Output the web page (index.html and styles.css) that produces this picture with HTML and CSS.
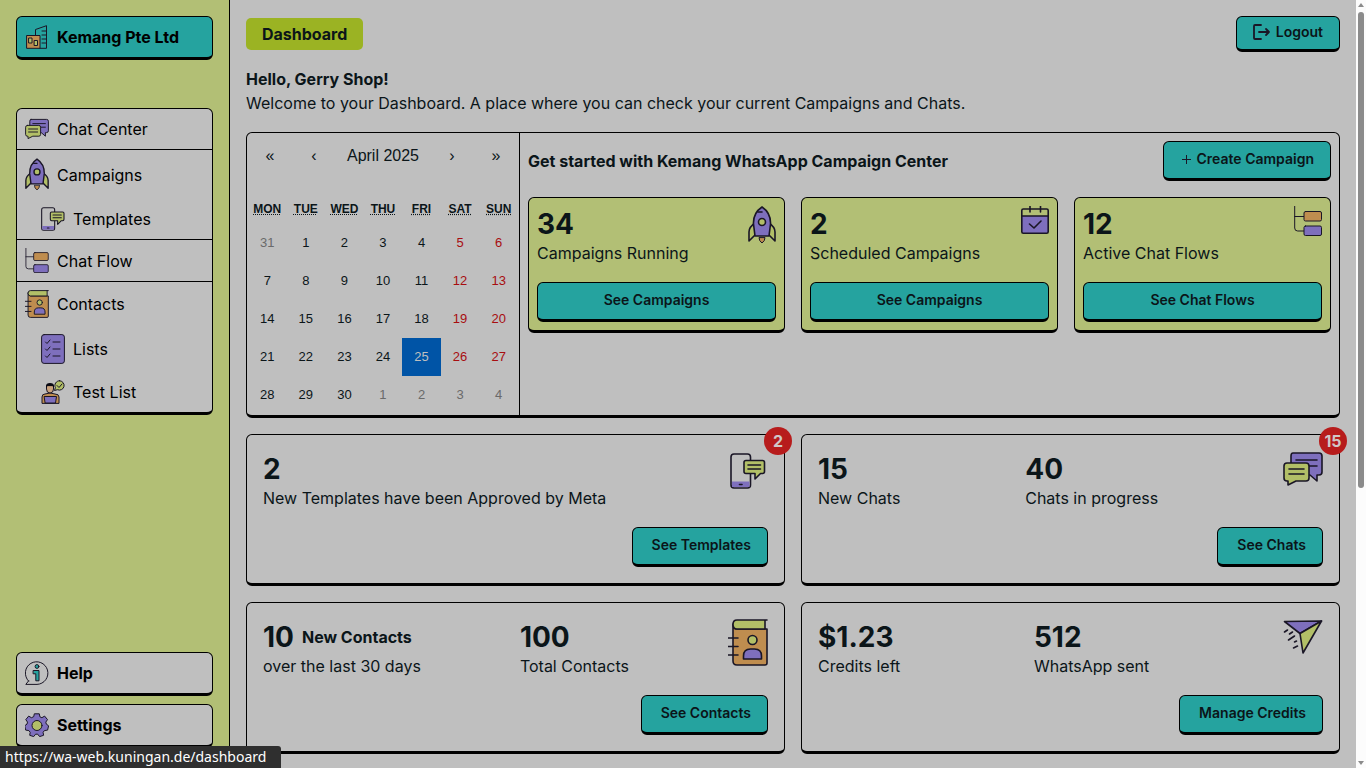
FILE: index.html
```html
<!DOCTYPE html>
<html lang="en">
<head>
<meta charset="utf-8">
<title>Dashboard</title>
<link rel="stylesheet" href="styles.css">
</head>
<body>
<svg class="sprite" aria-hidden="true">
  <symbol id="i-chat" viewBox="0 0 40 34">
    <path class="f-purple s" d="M10 1h26q3 0 3 3v16q0 3-3 3h-2v6l-7-6H10q-2 0-2-3V4q0-3 2-3z"/>
    <path class="s" d="M13 8h21M13 14h21"/>
    <path class="f-green s" d="M4 11h19q3 0 3 3v12q0 3-3 3H13l-8 4v-4H4q-3 0-3-3V14q0-3 3-3z"/>
    <path class="s" d="M6 17h15M6 22h15"/>
  </symbol>
  <symbol id="i-rocket" viewBox="0 0 28 38">
    <path class="f-green s" d="M7 17Q1 21 1 26v9l6-6zM21 17q6 4 6 9v9l-6-6z"/>
    <path class="f-orange thin" d="M11 32q0 3 3 5 3-2 3-5z"/>
    <path class="f-purple s" d="M14 1Q5 7 5.500 18L7 30h14l1.500-12Q23 7 14 1z"/>
    <path class="s" d="M10 6h4"/>
    <circle class="f-green s" cx="14" cy="16" r="3.500"/>
  </symbol>
  <symbol id="i-phone" viewBox="0 0 36 36">
    <rect class="s" x="1" y="1" width="19.500" height="34" rx="3"/>
    <path class="f-purple" d="M2 28.500h17.500V34H2z"/>
    <path class="s" d="M9.500 31.500h2.500"/>
    <path class="f-green s" d="M16 7.500h16.500q2 0 2 2v9q0 2-2 2H30.500l-5.500 5.500v-5.500h-9q-2 0-2-2v-9q0-2 2-2z"/>
    <path class="s" d="M18 12h12.500M18 16h12.500"/>
  </symbol>
  <symbol id="i-flow" viewBox="0 0 28 30">
    <path class="thin" d="M.7 0v22q0 3 3 3H10M.7 10.500H10"/>
    <rect class="f-orange thin" x="10" y="5.500" width="17.500" height="9.500" rx="1.500"/>
    <rect class="f-purple thin" x="10" y="20" width="17.500" height="9.500" rx="1.500"/>
  </symbol>
  <symbol id="i-contacts" viewBox="0 0 40 47">
    <path class="f-orange s" d="M5 6v36q0 4 4 4h28q2 0 2-2V10H9Q5 10 5 5z"/>
    <path class="f-green s" d="M39 1H9Q5 1 5 5.500T9 10h28V1"/>
    <circle class="f-green s" cx="24.500" cy="21" r="4.500"/>
    <path class="f-purple s" d="M15.500 40v-3q0-7 7-7h4q7 0 7 7v3z"/>
    <path class="s" d="M0 19h10M0 27.500h10M0 36h10"/>
  </symbol>
  <symbol id="i-list" viewBox="0 0 24 30">
    <rect class="f-purple thin" x=".6" y=".6" width="22.800" height="28.800" rx="2.500"/>
    <path class="thin" d="M4.500 8l1.500 1.500L9 6M12 8h7M4.500 15l1.500 1.500L9 13M12 15h7M4.500 22l1.500 1.500L9 20M12 22h7"/>
  </symbol>
  <symbol id="i-person" viewBox="0 0 24 24">
    <path class="f-orange thin" d="M1 23v-6q0-3 3-3l5-1 5 1q4 0 4 3v6z"/>
    <path class="f-skin thin" d="M5.500 6v3q0 4 3.500 4t3.500-4V6z"/>
    <path class="f-ink" d="M5 8V6q0-3 4-3t4 3v2L11.500 6h-5z"/>
    <path class="f-purple thin" d="M3.500 16.500h12l-1 6.500h-10z"/>
    <path class="f-green thin" d="M18.500.7a4.700 4.700 0 1 1-2 9l-3 .8.900-2.900A4.700 4.700 0 0 1 18.500.7z"/>
    <path class="thin" d="M16 5.500l2 2 3-3.500"/>
  </symbol>
  <symbol id="i-building" viewBox="0 0 24 24">
    <path class="thin" d="M10.500 10V4.500L21.500.7v22.600H15M17 6h4M17 10h4M17 14h4M17 18h4"/>
    <path class="f-orange thin" d="M2 10.500h13v12.800H2z"/>
    <path class="f-green thin" d="M4 13h3v5H4zM9.500 15.500h3v5h-3z"/>
  </symbol>
  <symbol id="i-help" viewBox="0 0 24 24">
    <path class="thin" d="M3.500 20A11.300 11.300 0 1 1 12 23.400H.8L3.500 20z"/>
    <circle class="f-teal thin" cx="12" cy="5.500" r="1.900"/>
    <path class="f-teal thin" d="M8.500 9.500H14v10.300h-3.200v-7H8.500z"/>
  </symbol>
  <symbol id="i-gear" viewBox="0 0 24 24">
    <path class="f-purple thin" d="M9.700.8h4.600l.6 3 2 .9 2.700-1.600 2.900 3.500-1.700 2.500.5 2 2.300 1.700-1 4.300-3.200.5-1.300 1.700.5 3-4 1.300-1.900-2.400h-2.100l-1.900 2.400-4-1.300.5-3-1.300-1.700-3.200-.5-1-4.300 2.300-1.700.5-2-1.700-2.500 2.900-3.500 2.700 1.600 2-.9z"/>
    <circle class="f-green thin" cx="12" cy="12.500" r="5"/>
  </symbol>
  <symbol id="i-calendar" viewBox="0 0 28 28">
    <path class="f-purple" d="M1 10h26v17H1z"/>
    <rect class="s" x=".8" y="3" width="26.400" height="24.200" rx="1.500"/>
    <path class="s" d="M1 10h26M9 0v6M19.500 0v6M8.500 18l4.500 4 7-7"/>
  </symbol>
  <symbol id="i-plane" viewBox="0 0 39 34">
    <path class="f-purple s" d="M1 1.500L38 1 16.500 13.500z"/>
    <path class="f-green s" d="M38 1L16.500 13.500 19.500 33z"/>
    <path class="s" d="M1 12l3-2M6 14l3-2M5 20l6-4M11 22l2-1M10 28l4-2"/>
  </symbol>
  <symbol id="i-logout" viewBox="0 0 18 16">
    <path class="bold" d="M8 1H2Q1 1 1 2v12q0 1 1 1h6M6 8h10M13 5l3 3-3 3"/>
  </symbol>
</svg>

<div class="app">
  <aside class="sidebar">
    <a class="tile tile-brand" href="#"><svg class="ic24"><use href="#i-building"/></svg>Kemang Pte Ltd</a>
    <nav class="menu">
      <div class="group">
        <a class="item" href="#"><svg class="ic24"><use href="#i-chat"/></svg>Chat Center</a>
      </div>
      <div class="group">
        <a class="item" href="#"><svg class="ic33"><use href="#i-rocket"/></svg>Campaigns</a>
        <a class="item sub" href="#"><svg class="ic24"><use href="#i-phone"/></svg>Templates</a>
      </div>
      <div class="group">
        <a class="item" href="#"><svg class="ic25"><use href="#i-flow"/></svg>Chat Flow</a>
      </div>
      <div class="group">
        <a class="item" href="#"><svg class="ic28"><use href="#i-contacts"/></svg>Contacts</a>
        <a class="item sub" href="#"><svg class="ic30"><use href="#i-list"/></svg>Lists</a>
        <a class="item sub" href="#"><svg class="ic24"><use href="#i-person"/></svg>Test List</a>
      </div>
    </nav>
    <div class="foot">
      <a class="tile" href="#"><svg class="ic24"><use href="#i-help"/></svg>Help</a>
      <a class="tile" href="#"><svg class="ic24"><use href="#i-gear"/></svg>Settings</a>
    </div>
  </aside>

  <main class="main">
    <header class="top">
      <h1 class="pill">Dashboard</h1>
      <button class="btn btn-logout" type="button"><svg class="ic-logout"><use href="#i-logout"/></svg>Logout</button>
    </header>
    <section class="intro">
      <h2 class="hello">Hello, Gerry Shop!</h2>
      <p class="welcome">Welcome to your Dashboard. A place where you can check your current Campaigns and Chats.</p>
    </section>

    <section class="panel">
      <div class="cal">
        <div class="cal-nav">
          <button type="button" aria-label="Previous year">«</button>
          <button type="button" aria-label="Previous month">‹</button>
          <button type="button" class="cal-label">April 2025</button>
          <button type="button" aria-label="Next month">›</button>
          <button type="button" aria-label="Next year">»</button>
        </div>
        <table class="cal-table">
          <thead><tr>
            <th><abbr title="Monday">MON</abbr></th><th><abbr title="Tuesday">TUE</abbr></th><th><abbr title="Wednesday">WED</abbr></th><th><abbr title="Thursday">THU</abbr></th><th><abbr title="Friday">FRI</abbr></th><th><abbr title="Saturday">SAT</abbr></th><th><abbr title="Sunday">SUN</abbr></th>
          </tr></thead>
          <tbody>
            <tr><td class="out">31</td><td>1</td><td>2</td><td>3</td><td>4</td><td class="we">5</td><td class="we">6</td></tr>
            <tr><td>7</td><td>8</td><td>9</td><td>10</td><td>11</td><td class="we">12</td><td class="we">13</td></tr>
            <tr><td>14</td><td>15</td><td>16</td><td>17</td><td>18</td><td class="we">19</td><td class="we">20</td></tr>
            <tr><td>21</td><td>22</td><td>23</td><td>24</td><td class="today">25</td><td class="we">26</td><td class="we">27</td></tr>
            <tr><td>28</td><td>29</td><td>30</td><td class="out">1</td><td class="out">2</td><td class="out">3</td><td class="out">4</td></tr>
          </tbody>
        </table>
      </div>
      <div class="start">
        <div class="start-head">
          <h2 class="start-title">Get started with Kemang WhatsApp Campaign Center</h2>
          <button class="btn btn-create" type="button"><svg class="ic-plus" viewBox="0 0 9 9"><path class="thin" d="M4.500 0v9M0 4.500h9"/></svg>Create Campaign</button>
        </div>
        <div class="stats">
          <article class="stat">
            <div class="row"><div><p class="num">34</p><p class="label">Campaigns Running</p></div><svg class="ic-rocket"><use href="#i-rocket"/></svg></div>
            <button class="btn" type="button">See Campaigns</button>
          </article>
          <article class="stat">
            <div class="row"><div><p class="num">2</p><p class="label">Scheduled Campaigns</p></div><svg class="ic-cal"><use href="#i-calendar"/></svg></div>
            <button class="btn" type="button">See Campaigns</button>
          </article>
          <article class="stat">
            <div class="row"><div><p class="num">12</p><p class="label">Active Chat Flows</p></div><svg class="ic-flow"><use href="#i-flow"/></svg></div>
            <button class="btn" type="button">See Chat Flows</button>
          </article>
        </div>
      </div>
    </section>

    <section class="cards">
      <article class="card">
        <span class="badge">2</span>
        <div class="row"><div><p class="num">2</p><p class="label">New Templates have been Approved by Meta</p></div><svg class="ic-phone"><use href="#i-phone"/></svg></div>
        <button class="btn btn-card" type="button">See Templates</button>
      </article>
      <article class="card">
        <span class="badge">15</span>
        <div class="row"><div><p class="num">15</p><p class="label">New Chats</p></div><div><p class="num">40</p><p class="label">Chats in progress</p></div><svg class="ic-chat"><use href="#i-chat"/></svg></div>
        <button class="btn btn-card" type="button">See Chats</button>
      </article>
      <article class="card">
        <div class="row"><div><p class="num">10<span class="aside">New Contacts</span></p><p class="label">over the last 30 days</p></div><div><p class="num">100</p><p class="label">Total Contacts</p></div><svg class="ic-contacts"><use href="#i-contacts"/></svg></div>
        <button class="btn btn-card" type="button">See Contacts</button>
      </article>
      <article class="card">
        <div class="row"><div><p class="num">$1.23</p><p class="label">Credits left</p></div><div><p class="num">512</p><p class="label">WhatsApp sent</p></div><svg class="ic-chat"><use href="#i-plane"/></svg></div>
        <button class="btn btn-card" type="button">Manage Credits</button>
      </article>
    </section>
  </main>

  <div class="scroll" aria-hidden="true">
    <span class="arrow up"></span>
    <span class="track"><span class="thumb"></span></span>
    <span class="arrow down"></span>
  </div>
</div>
<div class="status">https://wa-web.kuningan.de/dashboard</div>
</body>
</html>
```
FILE: styles.css
```css
:root {
  --page: #bfbfbf;
  --green: #b2bf75;
  --teal: #25a39f;
  --ink: #0b1519;
  --line: #000;
}
* { box-sizing: border-box; }
body {
  margin: 0;
  font: 16px/24px Inter, "Liberation Sans", sans-serif;
  color: var(--ink);
  background: var(--page);
  overflow: hidden;
}
h1, h2, p { margin: 0; font-size: 16px; }
a { color: #000; text-decoration: none; }
button { font: inherit; color: inherit; padding: 0; cursor: pointer; }
svg { display: block; flex: none; }
.sprite { position: absolute; width: 0; height: 0; }

.s, .thin, .bold { stroke: #1a1626; stroke-linecap: round; stroke-linejoin: round; fill: none; }
.s { stroke-width: 1.6; }
.thin { stroke-width: 1; }
.bold { stroke-width: 1.8; }
.f-purple { fill: #7e6fbd; }
.f-green { fill: #b2bf67; }
.f-orange { fill: #bf8d4f; }
.f-skin { fill: #c9a27c; }
.f-teal { fill: #25a39f; }
.f-ink { fill: #0b0b14; }

.app { display: flex; height: 100vh; }

.sidebar {
  flex: none;
  width: 230px;
  padding: 16px 16px 20px;
  display: flex;
  flex-direction: column;
  background: var(--green);
  border-right: 1px solid var(--line);
}
.tile {
  display: flex;
  align-items: center;
  gap: 8px;
  height: 44px;
  padding: 0 8px;
  font-weight: 700;
  line-height: 22px;
  background: var(--page);
  border: 1px solid var(--line);
  border-bottom-width: 3px;
  border-radius: 6px;
}
.tile-brand { background: var(--teal); }
.menu {
  margin-top: 48px;
  background: var(--page);
  border: 1px solid var(--line);
  border-bottom-width: 3px;
  border-radius: 6px;
}
.group + .group { border-top: 1px solid var(--line); }
.item { display: flex; align-items: center; gap: 8px; padding: 8px; }
.sub { padding-left: 24px; }
.foot { margin-top: auto; display: grid; gap: 8px; }

.ic24 { width: 24px; height: 24px; }
.ic25 { width: 24px; height: 25px; }
.ic28 { width: 24px; height: 28px; }
.ic30 { width: 24px; height: 30px; }
.ic33 { width: 24px; height: 33px; }
.ic-rocket { width: 28px; height: 38px; }
.ic-cal { width: 28px; height: 28px; }
.ic-flow { width: 28px; height: 30px; }
.ic-phone { width: 36px; height: 36px; margin: 2px 2px 0 0; }
.ic-chat { width: 40px; height: 34px; margin-top: 1px; }
.ic-contacts { width: 40px; height: 47px; }
.ic-logout { width: 18px; height: 16px; }
.ic-plus { width: 9px; height: 9px; }

.main { flex: 1; min-width: 0; padding: 16px; overflow: hidden; }
.top { display: flex; justify-content: space-between; align-items: center; }
.pill {
  padding: 4px 16px;
  background: #9bb323;
  border-radius: 5px;
  font-weight: 700;
}
.btn {
  display: flex;
  align-items: center;
  justify-content: center;
  height: 40px;
  padding-bottom: 2px;
  font-size: 14px;
  font-weight: 600;
  background: var(--teal);
  border: 1px solid var(--line);
  border-bottom-width: 3px;
  border-radius: 6px;
}
.btn-logout { height: 36px; padding-left: 16px; padding-right: 16px; gap: 5px; }
.btn-create { padding-left: 18px; padding-right: 16px; gap: 6px; }
.btn-card { align-self: flex-end; padding-left: 19px; padding-right: 16px; }

.intro { margin: 15px 0 17px; }
.hello { font-weight: 700; }

.panel {
  display: flex;
  border: 1px solid var(--line);
  border-bottom-width: 3px;
  border-radius: 6px;
}
.cal {
  flex: none;
  width: 273px;
  padding: 1px;
  border-right: 1px solid var(--line);
  font-family: "Liberation Sans", Arial, sans-serif;
}
.cal-nav { display: flex; height: 44px; margin-bottom: 16px; }
.cal-nav button { width: 44px; border: 0; background: none; }
.cal-nav .cal-label { flex: 1; }
.cal-table { width: 100%; table-layout: fixed; border-collapse: collapse; text-align: center; font-size: 13px; line-height: 16px; }
.cal-table th { height: 30px; padding: 0; font-size: 12px; }
.cal-table td { height: 38px; padding: 0; }
.cal-table .out { color: #6a6a6a; }
.cal-table .we { color: #a80d10; }
.cal-table .today { background: #0054a6; color: #bfbfbf; }

.start { flex: 1; min-width: 0; padding: 8px; display: flex; flex-direction: column; gap: 16px; }
.start-head { display: flex; justify-content: space-between; align-items: center; }
.start-title { font-weight: 700; line-height: 22px; }
.stats { display: grid; grid-template-columns: repeat(3, 1fr); gap: 16px; }
.stat, .card {
  display: flex;
  flex-direction: column;
  gap: 16px;
  border: 1px solid var(--line);
  border-bottom-width: 3px;
  border-radius: 6px;
}
.stat { padding: 8px; background: var(--green); }
.row { display: flex; justify-content: space-between; align-items: flex-start; }
.num { display: flex; align-items: center; gap: 8px; font-size: 28px; line-height: 36px; font-weight: 700; }
.label { line-height: 22px; padding-bottom: 2px; }
.aside { font-size: 16px; line-height: 24px; }

.cards { display: grid; grid-template-columns: repeat(2, 1fr); gap: 16px; margin-top: 16px; }
.card { position: relative; padding: 16px; }
.badge {
  position: absolute;
  top: -8px;
  right: -8px;
  width: 28px;
  height: 28px;
  border-radius: 50%;
  background: #b71c1c;
  color: #d0c8c8;
  font-size: 16px;
  line-height: 28px;
  font-weight: 700;
  text-align: center;
}

.scroll {
  flex: none;
  width: 10px;
  padding: 3px 2px;
  display: flex;
  flex-direction: column;
  align-items: center;
  background: #fcfcfc;
}
.arrow { border: 3px solid transparent; }
.up { border-top: 0; border-bottom: 4px solid #8b8b8b; }
.down { border-bottom: 0; border-top: 4px solid #8b8b8b; }
.track { flex: 1; width: 6px; padding: 5px 0; }
.thumb { display: block; height: 64%; border-radius: 3px; background: #8b8b8b; }

.status {
  position: fixed;
  left: 0;
  bottom: 0;
  padding: 0 15px 0 5px;
  font: 14px/22px "Noto Sans", sans-serif;
  color: #fff;
  background: #2f2f2f;
  border-top-right-radius: 3px;
}
```
